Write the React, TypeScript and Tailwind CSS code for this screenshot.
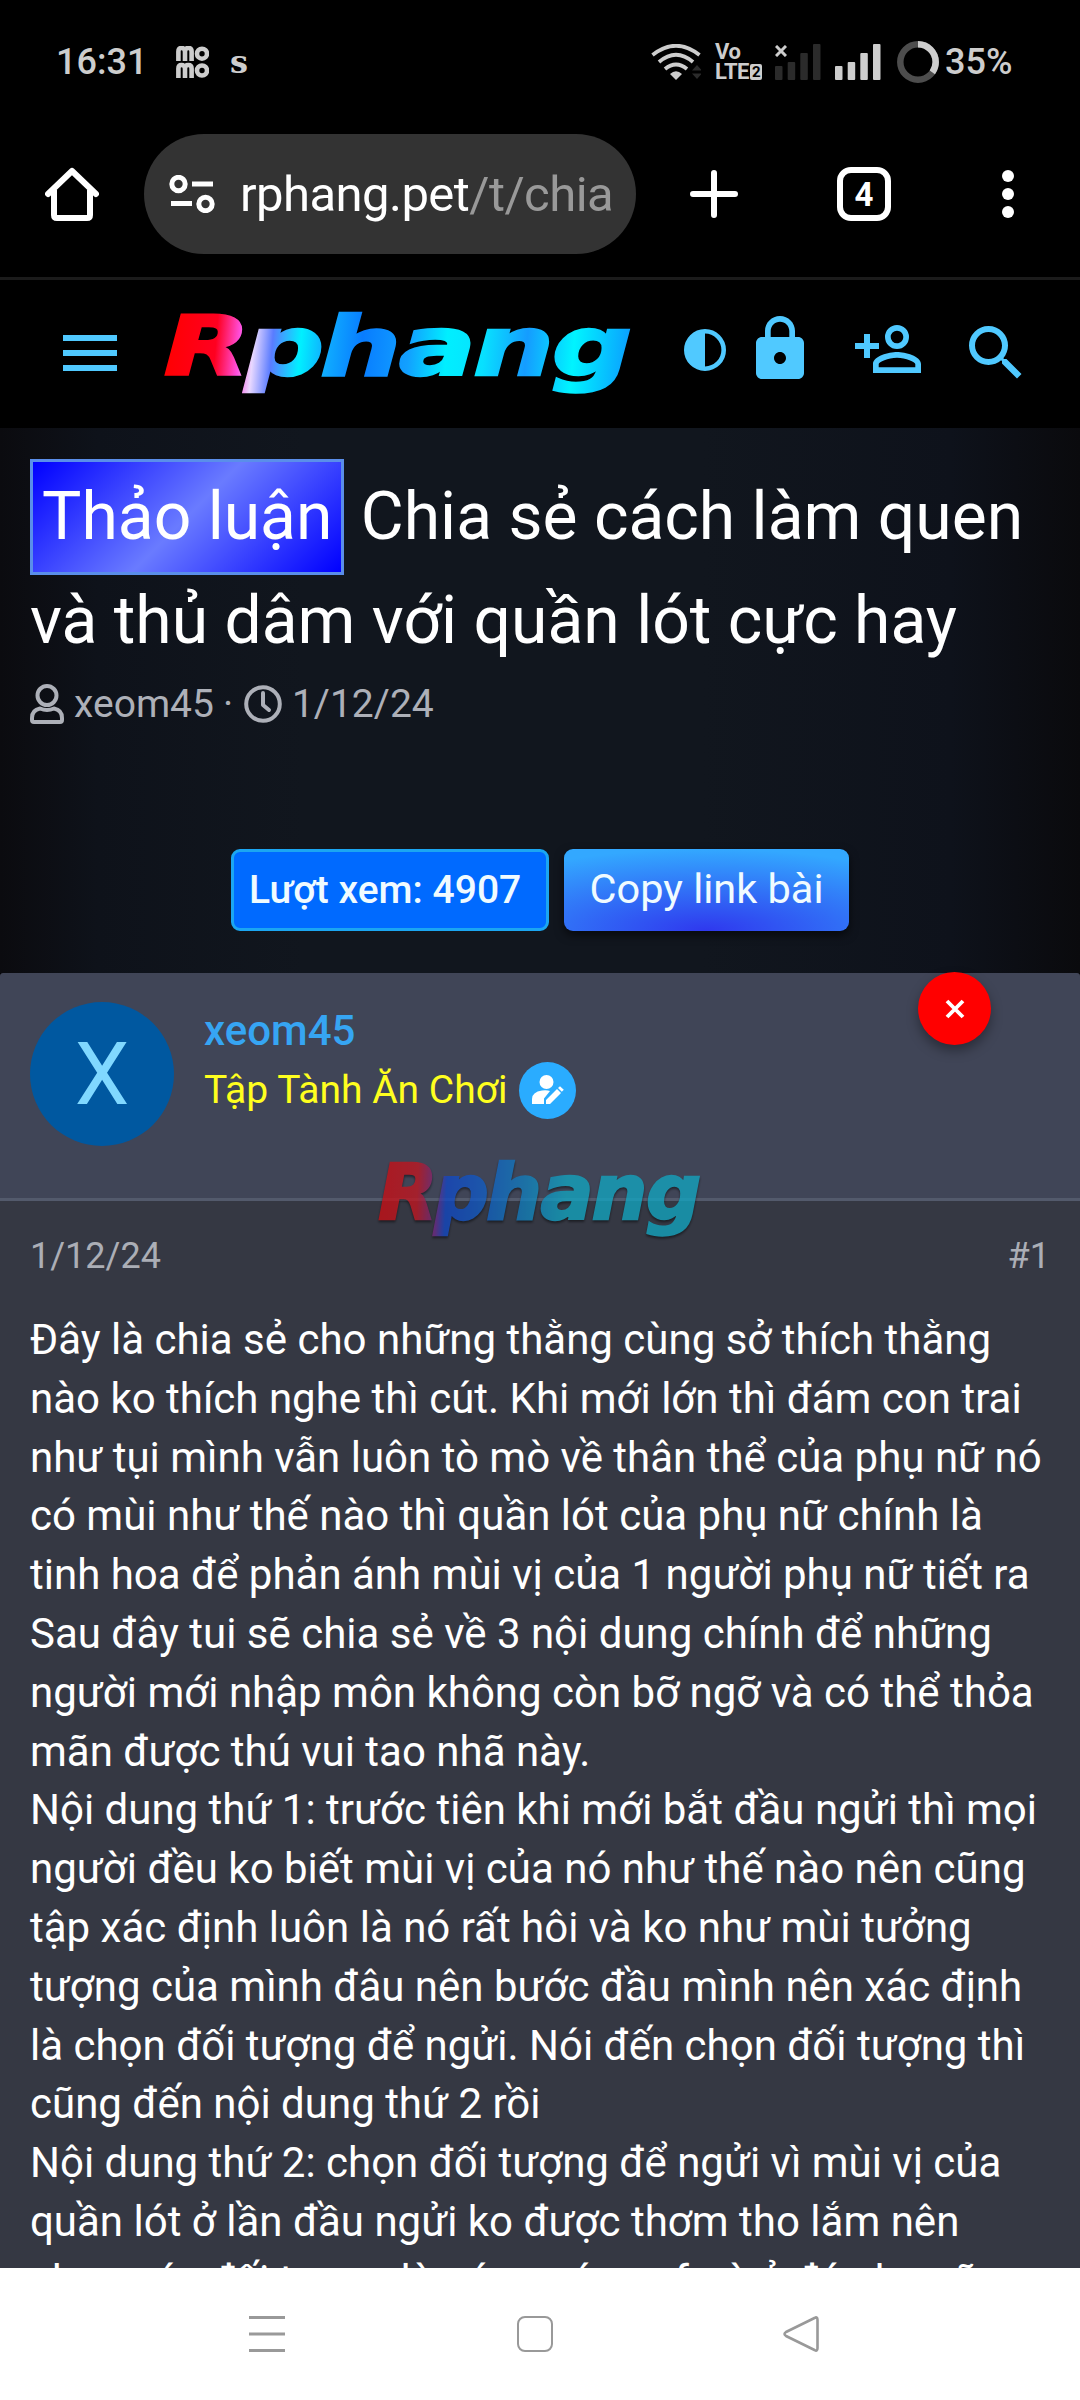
import type { ReactNode } from "react";
import { MdLock } from "react-icons/md";

const postLines = [
  "Đây là chia sẻ cho những thằng cùng sở thích thằng",
  "nào ko thích nghe thì cút. Khi mới lớn thì đám con trai",
  "như tụi mình vẫn luôn tò mò về thân thể của phụ nữ nó",
  "có mùi như thế nào thì quần lót của phụ nữ chính là",
  "tinh hoa để phản ánh mùi vị của 1 người phụ nữ tiết ra",
  "Sau đây tui sẽ chia sẻ về 3 nội dung chính để những",
  "người mới nhập môn không còn bỡ ngỡ và có thể thỏa",
  "mãn được thú vui tao nhã này.",
  "Nội dung thứ 1: trước tiên khi mới bắt đầu ngửi thì mọi",
  "người đều ko biết mùi vị của nó như thế nào nên cũng",
  "tập xác định luôn là nó rất hôi và ko như mùi tưởng",
  "tượng của mình đâu nên bước đầu mình nên xác định",
  "là chọn đối tượng để ngửi. Nói đến chọn đối tượng thì",
  "cũng đến nội dung thứ 2 rồi",
  "Nội dung thứ 2: chọn đối tượng để ngửi vì mùi vị của",
  "quần lót ở lần đầu ngửi ko được thơm tho lắm nên",
  "chọn các đối tượng là nóng có em fmà ở đó cho cũng",
];

const letters = [
  { char: "R", x: -1, width: 86 },
  { char: "p", x: 80, width: 79 },
  { char: "h", x: 155, width: 81 },
  { char: "a", x: 234, width: 77 },
  { char: "n", x: 308, width: 81 },
  { char: "g", x: 387, width: 80 },
];

function Logo({ className, fill, children }: { className: string; fill: string; children: ReactNode }) {
  return (
    <svg
      viewBox="0 0 468 86"
      preserveAspectRatio="none"
      overflow="visible"
      className={className}
      aria-label="Rphang"
    >
      <defs>{children}</defs>
      <g
        fill={`url(#${fill})`}
        stroke={`url(#${fill})`}
        strokeWidth="2.5"
        fontFamily="'DejaVu Sans', sans-serif"
        fontWeight="700"
        fontStyle="italic"
        fontSize="82"
      >
        {letters.map((l) => (
          <text key={l.char} x={l.x} y="64" textLength={l.width} lengthAdjust="spacingAndGlyphs">
            {l.char}
          </text>
        ))}
      </g>
    </svg>
  );
}

function SignalBars({ className }: { className: string }) {
  return (
    <svg viewBox="0 0 46 36" className={className} fill="currentColor">
      <rect x="0" y="22" width="7.5" height="14" rx="1" />
      <rect x="12.7" y="18" width="7.5" height="18" rx="1" />
      <rect x="25.3" y="9" width="7.5" height="27" rx="1" />
      <rect x="38" y="0" width="7.5" height="36" rx="1" />
    </svg>
  );
}

function StatusBar() {
  return (
    <div className="flex h-[124px] items-center pl-[56px] text-[#cdcdcd]">
      <span className="w-[120px] text-[36px] font-medium leading-none">16:31</span>
      <svg viewBox="0 0 33 32" className="h-8 w-[33px]" fill="none" stroke="currentColor" strokeWidth="4.6">
        <path d="M2.4 15V5.5Q2.4 2 5.500 2T9 5.500V15M9 5.500Q9 2 12.300 2T15.600 5.500V15" />
        <circle cx="26" cy="7.700" r="5" />
        <path d="M2.400 32V22.500Q2.400 19 5.500 19T9 22.500V32M9 22.500Q9 19 12.300 19T15.600 22.500V32" />
        <circle cx="26" cy="24.500" r="5" />
      </svg>
      <span className="ml-[21px] font-['DejaVu_Serif'] text-[32px] font-bold leading-none">s</span>
      <svg viewBox="0 0 50 36" className="ml-auto h-9 w-[50px]" fill="none" stroke="currentColor" strokeWidth="3.800">
        <path d="M1.500 11Q25-7.500 48.500 11M8 18Q25 3.500 42 18M14 25Q25 16 36 25" />
        <path d="M19 30Q25 24.500 31 30L25 36Z" fill="currentColor" stroke="none" />
        <path d="M46 21l5 5.500H41zM46 35l5-5.500H41z" fill="#2b2b2b" stroke="none" />
      </svg>
      <div className="ml-[14px] w-[47px] text-[22px] font-bold leading-[20px] tracking-[-0.5px]">
        <div className="h-5">Vo</div>
        <div className="flex h-5 items-center">
          LTE
          <span className="ml-px h-4 w-3 rounded-xs bg-[#cdcdcd] text-center text-[15px] leading-4 text-black">2</span>
        </div>
      </div>
      <div className="relative ml-[13px] h-9 w-[46px]">
        <SignalBars className="h-9 w-[46px] text-[#2b2b2b]" />
        <svg viewBox="0 0 12 12" className="absolute left-0 top-px size-3" stroke="currentColor" strokeWidth="3">
          <path d="M1 1l10 10M11 1L1 11" />
        </svg>
      </div>
      <SignalBars className="ml-[14px] h-9 w-[46px]" />
      <svg viewBox="0 0 42 42" className="ml-4 size-[42px]" fill="none" strokeWidth="6.500">
        <circle cx="21" cy="21" r="17.700" stroke="#4d4d4d" />
        <circle
          cx="21"
          cy="21"
          r="17.700"
          stroke="#cdcdcd"
          pathLength="100"
          strokeDasharray="35 65"
          transform="rotate(-90 21 21)"
        />
      </svg>
      <span className="ml-[6px] mr-[67px] w-[68px] text-[36px] font-medium leading-none">35%</span>
    </div>
  );
}

function Toolbar() {
  return (
    <div className="flex h-[156px] items-start border-b-[3px] border-[#1b1b1b] pl-[45px] pt-[10px] text-white">
      <div className="flex h-[120px] w-full items-center">
        <svg viewBox="0 0 54 54" className="size-[54px]" fill="none" stroke="currentColor" strokeWidth="6">
          <path d="M3 27L27 4l24 23" strokeLinecap="round" strokeLinejoin="round" />
          <path d="M9 23v25q0 3 3 3h30q3 0 3-3V23" />
        </svg>
        <div className="ml-[45px] flex h-[120px] w-[492px] items-center rounded-full bg-[#333333] pl-[25px]">
          <svg viewBox="0 0 46 38" className="h-[38px] w-[46px]" fill="none" stroke="currentColor" strokeWidth="5">
            <circle cx="9.500" cy="9" r="6.700" />
            <circle cx="36.500" cy="29" r="6.700" />
            <path d="M23 9h21M2 28.500h21" />
          </svg>
          <span className="ml-[25px] whitespace-nowrap text-[49px] leading-none tracking-[-0.55px]">
            rphang.pet<span className="text-[#999999]">/t/chia</span>
          </span>
        </div>
        <svg viewBox="0 0 48 48" className="ml-[54px] size-12" stroke="currentColor" strokeWidth="6" strokeLinecap="round">
          <path d="M24 3v42M3 24h42" />
        </svg>
        <div className="ml-[99px] flex size-[54px] items-center justify-center rounded-[14px] border-[6px] border-white text-[33px] font-bold leading-none">
          4
        </div>
        <svg viewBox="0 0 12 48" className="ml-[111px] h-12 w-3" fill="currentColor">
          <circle cx="6" cy="6" r="6" />
          <circle cx="6" cy="24" r="6" />
          <circle cx="6" cy="42" r="6" />
        </svg>
      </div>
    </div>
  );
}

function SiteHeader() {
  return (
    <header className="flex h-[148px] items-start pl-[63px] pt-[31px] text-[#50c9ff]">
      <svg viewBox="0 0 54 36" className="mt-6 h-9 w-[54px]" fill="currentColor">
        <path d="M0 0h54v6H0zM0 15h54v6H0zM0 30h54v6H0z" />
      </svg>
      <Logo className="ml-[48px] h-[86px] w-[468px]" fill="logo-header">
        <linearGradient id="logo-header" gradientUnits="userSpaceOnUse" x1="0" y1="20" x2="468" y2="60">
          <stop offset="0" stopColor="#ff0000" />
          <stop offset="0.110" stopColor="#ff0020" />
          <stop offset="0.160" stopColor="#ff50e0" />
          <stop offset="0.190" stopColor="#e8d8ff" />
          <stop offset="0.230" stopColor="#5a7cff" />
          <stop offset="0.290" stopColor="#00f0ff" />
          <stop offset="0.340" stopColor="#10b0ff" />
          <stop offset="0.420" stopColor="#087cff" />
          <stop offset="0.520" stopColor="#12a0ff" />
          <stop offset="0.600" stopColor="#00efff" />
          <stop offset="0.680" stopColor="#08e0ff" />
          <stop offset="0.770" stopColor="#159cff" />
          <stop offset="0.870" stopColor="#00f4ff" />
          <stop offset="1" stopColor="#0c98ff" />
        </linearGradient>
      </Logo>
      <svg viewBox="0 0 42 42" className="ml-[51px] mt-[18px] size-[42px]">
        <circle cx="21" cy="21" r="18.700" fill="none" stroke="currentColor" strokeWidth="4.600" />
        <path d="M21 1a20 20 0 0 0 0 40z" fill="currentColor" />
      </svg>
      <MdLock className="ml-[18px] mt-[2px] size-[72px]" />
      <svg viewBox="0 0 24 24" className="ml-9 mt-[2px] size-[72px]" fill="currentColor">
        <path d="M15,4A4,4 0 0,0 11,8A4,4 0 0,0 15,12A4,4 0 0,0 19,8A4,4 0 0,0 15,4M15,5.9C16.16,5.9 17.1,6.84 17.1,8C17.1,9.16 16.16,10.1 15,10.1A2.1,2.1 0 0,1 12.9,8A2.1,2.1 0 0,1 15,5.900M4,7V10H1V12H4V15H6V12H9V10H6V7H4M15,13C12.330,13 7,14.330 7,17V20H23V17C23,14.330 17.670,13 15,13M15,14.900C17.970,14.900 21.100,16.360 21.100,17V18.100H8.900V17C8.900,16.360 12,14.900 15,14.900Z" />
      </svg>
      <svg viewBox="0 0 24 24" className="ml-9 mt-[6px] size-[72px]" fill="currentColor">
        <path d="M9.500,3A6.500,6.500 0 0,1 16,9.500C16,11.110 15.410,12.590 14.440,13.730L14.710,14H15.500L20.500,19L19,20.500L14,15.500V14.710L13.730,14.440C12.590,15.410 11.110,16 9.500,16A6.500,6.500 0 0,1 3,9.500A6.500,6.500 0 0,1 9.500,3M9.500,5C7,5 5,7 5,9.500C5,12 7,14 9.500,14C12,14 14,12 14,9.500C14,7 12,5 9.500,5Z" />
      </svg>
    </header>
  );
}

function ThreadHead() {
  return (
    <section className="h-[545px] bg-[#11151d] bg-[linear-gradient(90deg,#0b0b0f_0%,#0e121a_9%,#11161e_28%,#11161e_65%,#0e121b_88%,#0a0a0d_100%)] px-[30px] pt-[31px]">
      <h1 className="whitespace-nowrap text-[66px] leading-[92.4px] text-white">
        <span className="inline-block border-[3px] border-[#5a8eea] bg-[linear-gradient(135deg,#0000ff_0%,#6a7bff_50%,#0000ff_100%)] p-[9px]">
          Thảo luận
        </span>{" "}
        Chia sẻ cách làm quen
        <br />
        và thủ dâm với quần lót cực hay
      </h1>
      <div className="mt-[9px] flex h-[55px] items-center whitespace-nowrap text-[39px] text-[#adb0b8]">
        <svg viewBox="0 0 34 40" className="h-10 w-[34px]" fill="none" stroke="currentColor" strokeWidth="4">
          <circle cx="17" cy="11.500" r="9.500" />
          <path d="M10 24.500Q2 26 2 34v2q0 2 2 2h26q2 0 2-2v-2q0-8-8-9.500-7 3-14 0z" />
        </svg>
        <span className="ml-[10px]">xeom45</span>
        <span className="ml-[9px] w-[21px]">·</span>
        <svg viewBox="0 0 38 38" className="h-[38px] w-[38px]" fill="none" stroke="currentColor" strokeWidth="4">
          <circle cx="19" cy="19" r="16.800" />
          <path d="M19 8v12l6 5" strokeLinecap="round" strokeLinejoin="round" />
        </svg>
        <span className="ml-[10px]">1/12/24</span>
      </div>
      <div className="mt-[117px] flex justify-center gap-[15px] whitespace-nowrap text-[#f0fbff]">
        <div className="flex h-[82px] w-[318px] items-center rounded-[9px] border-[3px] border-[#1ba6f2] bg-[#006aff] pl-[15px] pt-px text-[39px] font-medium">
          Lượt xem: 4907
        </div>
        <button className="h-[82px] w-[285px] rounded-[9px] bg-[radial-gradient(100%_100%_at_50%_100%,#2f38ee_0%,#33a8ff_100%)] pb-px text-[41.5px] shadow-[0_4px_10px_rgba(0,0,0,0.6)]">
          Copy link bài
        </button>
      </div>
    </section>
  );
}

function AuthorCard() {
  return (
    <div className="relative flex h-[228px] rounded-t-[3px] border-b-[3px] border-[#535a6c] bg-[#404557] pl-[30px] pt-[29px]">
      <div className="flex size-[144px] items-center justify-center rounded-full bg-[#0058a0] text-[87px] leading-none text-[#80d8ff]">
        X
      </div>
      <div className="ml-[30px] whitespace-nowrap">
        <div className="text-[42px] font-medium leading-[58px] text-[#36a5f3]">xeom45</div>
        <div className="mt-px flex items-center text-[39px] text-[#ffff1f]">
          <span>Tập Tành Ăn Chơi</span>
          <span className="ml-[12px] flex size-[57px] items-center justify-center rounded-full bg-[#2aacff] text-white">
            <svg viewBox="0 0 32 30" className="h-[30px] w-8" fill="currentColor">
              <circle cx="14.500" cy="7" r="7" />
              <path d="M0 29v-5q0-7 10-8.500 5-.5 8 .5l-6 7.500V29zM14 29v-4l11-11 4 4-11 11zM26 13l2-1.800 3.800 3.600-2 2z" />
            </svg>
          </span>
        </div>
      </div>
      <button className="absolute -top-px left-[918px] flex size-[73px] items-center justify-center rounded-full bg-[#ff0000] shadow-[0_6px_12px_rgba(0,0,0,0.35)]">
        <svg viewBox="0 0 20 20" className="size-5" stroke="white" strokeWidth="3.800">
          <path d="M2 2l16 16M18 2L2 18" />
        </svg>
      </button>
      <Logo
        className="absolute left-[379px] top-[186px] z-10 h-[80px] w-[323px] opacity-75 drop-shadow-[0_2px_1px_rgba(0,0,0,0.6)]"
        fill="logo-mark"
      >
        <linearGradient id="logo-mark" gradientUnits="userSpaceOnUse" x1="0" y1="20" x2="468" y2="50">
          <stop offset="0" stopColor="#cf0b10" />
          <stop offset="0.120" stopColor="#c4151f" />
          <stop offset="0.180" stopColor="#6d2a88" />
          <stop offset="0.210" stopColor="#1048c8" />
          <stop offset="0.300" stopColor="#1058c8" />
          <stop offset="0.450" stopColor="#1080c0" />
          <stop offset="0.580" stopColor="#10a8c4" />
          <stop offset="1" stopColor="#10a8c4" />
        </linearGradient>
      </Logo>
    </div>
  );
}

function PostBody() {
  return (
    <article className="h-[1067px] overflow-hidden bg-[#353843] px-[30px] pt-[30px]">
      <div className="flex h-[51px] justify-between text-[36px] leading-[51px] text-[#abaeb6]">
        <span>1/12/24</span>
        <span>#1</span>
      </div>
      <div className="mt-[29px] whitespace-nowrap text-[42px] leading-[58.8px] text-white">
        {postLines.map((line) => (
          <div key={line}>{line}</div>
        ))}
      </div>
    </article>
  );
}

function NavBar() {
  return (
    <nav className="flex h-[132px] items-center bg-white pl-[249px] text-[#999999]">
      <svg viewBox="0 0 36 36" className="size-9" stroke="currentColor" strokeWidth="3">
        <path d="M0 1.500h36M0 18h36M0 34.500h36" />
      </svg>
      <div className="ml-[232px] size-9 rounded-[8px] border-[2.5px] border-[#999999]" />
      <svg viewBox="0 0 36 36" className="ml-[230px] size-9" fill="none" stroke="currentColor" strokeWidth="2.600">
        <path d="M31.500 2Q34.500 0 34.500 4v28q0 4-3 2L3 20q-3-2 0-4z" strokeLinejoin="round" />
      </svg>
    </nav>
  );
}

export default function App() {
  return (
    <main className="h-[2400px] w-[1080px] overflow-hidden bg-black font-[Roboto,'Noto_Sans',sans-serif]">
      <StatusBar />
      <Toolbar />
      <SiteHeader />
      <ThreadHead />
      <AuthorCard />
      <PostBody />
      <NavBar />
    </main>
  );
}
